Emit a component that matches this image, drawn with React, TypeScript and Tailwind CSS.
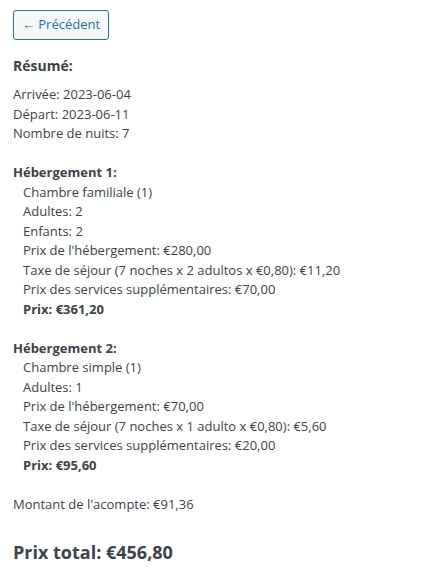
import React from "react";

const Line = ({ children, bold = false }: { children: React.ReactNode; bold?: boolean }) => (
  <div className={bold ? "font-bold" : ""}>{children}</div>
);

export default function App() {
  return (
    <div
      className="bg-white text-[#3c434a] text-[13px] leading-[19.5px] px-[13px] pt-[10px] min-h-[571px]"
      style={{ fontFamily: '"Open Sans", "Noto Sans", sans-serif' }}
    >
      <button className="h-[30px] w-[96px] flex items-center justify-center border border-[#2271b1] rounded-[3px] bg-[#f6f7f7] text-[#2271b1] text-[13px]">
        ← Précédent
      </button>
      <h3 className="mt-[16px] mb-[9px] text-[14px] font-bold leading-[20px]">Résumé:</h3>
      <div>
        <Line>Arrivée: 2023-06-04</Line>
        <Line>Départ: 2023-06-11</Line>
        <Line>Nombre de nuits: 7</Line>
        <div className="h-[19.5px]" />
        <Line bold>Hébergement 1:</Line>
        <div className="pl-[10px]">
          <Line>Chambre familiale (1)</Line>
          <Line>Adultes: 2</Line>
          <Line>Enfants: 2</Line>
          <Line>Prix de l'hébergement: €280,00</Line>
          <Line>Taxe de séjour (7 noches x 2 adultos x €0,80): €11,20</Line>
          <Line>Prix des services supplémentaires: €70,00</Line>
          <Line bold>Prix: €361,20</Line>
        </div>
        <div className="h-[19.5px]" />
        <Line bold>Hébergement 2:</Line>
        <div className="pl-[10px]">
          <Line>Chambre simple (1)</Line>
          <Line>Adultes: 1</Line>
          <Line>Prix de l'hébergement: €70,00</Line>
          <Line>Taxe de séjour (7 noches x 1 adulto x €0,80): €5,60</Line>
          <Line>Prix des services supplémentaires: €20,00</Line>
          <Line bold>Prix: €95,60</Line>
        </div>
        <div className="h-[19.5px]" />
        <Line>Montant de l'acompte: €91,36</Line>
      </div>
      <h2 className="mt-[25px] text-[18px] font-bold leading-[26px]">Prix total: €456,80</h2>
    </div>
  );
}
